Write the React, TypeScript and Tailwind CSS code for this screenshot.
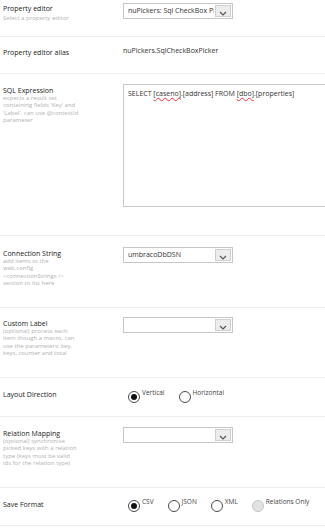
import React from 'react';

const font = { fontFamily: '"Open Sans", "Liberation Sans", sans-serif' };

function Chevron() {
  return (
    <svg width="8" height="5" viewBox="0 0 8 5" className="mt-[5px]">
      <polyline points="1,1 4,4 7,1" fill="none" stroke="#555" strokeWidth="1.2" />
    </svg>
  );
}

function FakeSelect({ value }: { value?: string }) {
  return (
    <div className="flex h-[16px] w-[110px] border border-[#c6c6c6] bg-white">
      <div className="flex-1 overflow-hidden whitespace-nowrap pl-[4px] text-[7px] leading-[14px] text-[#333]">
        {value}
      </div>
      <div className="m-[1px] flex w-[16px] items-center justify-center border border-[#cfcfcf] bg-[#ececec]">
        <Chevron />
      </div>
    </div>
  );
}

function Radio({ checked, disabled, label }: { checked?: boolean; disabled?: boolean; label: string }) {
  return (
    <div className="mr-[14px] flex items-start">
      <div
        className={
          disabled
            ? 'h-[12px] w-[12px] shrink-0 rounded-full border border-[#c4c4c4] bg-[#e2e2e2]'
            : 'flex h-[12px] w-[12px] shrink-0 items-center justify-center rounded-full border border-[#4a4a4a] bg-white'
        }
      >
        {checked && <div className="h-[6px] w-[6px] rounded-full bg-[#111]" />}
      </div>
      <span className="-mt-[2px] ml-[2px] whitespace-nowrap text-[6.5px] leading-[8px] text-[#444]">{label}</span>
    </div>
  );
}

function Row({
  cls,
  label,
  desc,
  labelCls = 'mt-[2px]',
  descCls = '',
  children,
}: {
  cls: string;
  label: string;
  desc?: string[];
  labelCls?: string;
  descCls?: string;
  children?: React.ReactNode;
}) {
  return (
    <div className={`flex border-b border-[#efefef] ${cls}`}>
      <div className="w-[123px] shrink-0 pl-[3px]">
        <div className={`text-[7px] leading-[9px] text-[#1a1a1a] ${labelCls}`}>{label}</div>
        {desc && (
          <div className={`text-[6px] leading-[7.3px] text-[#b2b2b2] ${descCls}`}>
            {desc.map((d) => (
              <div key={d} className="whitespace-nowrap">
                {d}
              </div>
            ))}
          </div>
        )}
      </div>
      <div className="min-w-0 flex-1">{children}</div>
    </div>
  );
}

export default function App() {
  return (
    <div className="h-[529px] w-[325px] overflow-hidden bg-white" style={font}>
      <Row cls="h-[37px] pt-[3px]" label="Property editor" labelCls="mt-[1px]" desc={['Select a property editor']} descCls="mt-[2px]">
        <FakeSelect value="nuPickers: Sql CheckBox Picker" />
      </Row>

      <Row cls="h-[37px] pt-[10px]" label="Property editor alias" labelCls="mt-[1px]">
        <div className="text-[7px] leading-[7px] text-[#333]">nuPickers.SqlCheckBoxPicker</div>
      </Row>

      <Row
        cls="h-[162px] pt-[10px]"
        label="SQL Expression"
        desc={['expects a result set', "containing fields 'Key' and", "'Label', can use @contextId", 'parameter']}
      >
        <div className="h-[123px] w-[220px] whitespace-nowrap border border-[#c8c8c8] px-[4px] pt-[4px] text-[7px] leading-[10px] text-[#333]">
          SELECT <span className="underline decoration-red-500 decoration-wavy">[caseno]</span>.[address] FROM{' '}
          <span className="underline decoration-red-500 decoration-wavy">[dbo]</span>.[properties]
        </div>
      </Row>

      <Row
        cls="h-[72px] pt-[11px]"
        label="Connection String"
        desc={['add items to the', 'web.config', '<connectionStrings />', 'section to list here']}
      >
        <FakeSelect value="umbracoDbDSN" />
      </Row>

      <Row
        cls="h-[70px] pt-[9px]"
        label="Custom Label"
        desc={['(optional) process each', 'item though a macro, can', 'use the parameters: key,', 'keys, counter and total']}
      >
        <FakeSelect />
      </Row>

      <Row cls="h-[39px] pt-[10px]" label="Layout Direction" labelCls="mt-[2px]">
        <div className="mt-[3px] flex pl-[5px]">
          <Radio checked label="Vertical" />
          <Radio label="Horizontal" />
        </div>
      </Row>

      <Row
        cls="h-[71px] pt-[10px]"
        label="Relation Mapping"
        desc={['(optional) synchronise', 'picked keys with a relation', 'type (keys must be valid', 'ids for the relation type)']}
      >
        <FakeSelect />
      </Row>

      <Row cls="h-[38px] pt-[10px]" label="Save Format" labelCls="mt-[2px]">
        <div className="mt-[2px] flex pl-[5px]">
          <Radio checked label="CSV" />
          <Radio label="JSON" />
          <Radio label="XML" />
          <Radio disabled label="Relations Only" />
        </div>
      </Row>
    </div>
  );
}
